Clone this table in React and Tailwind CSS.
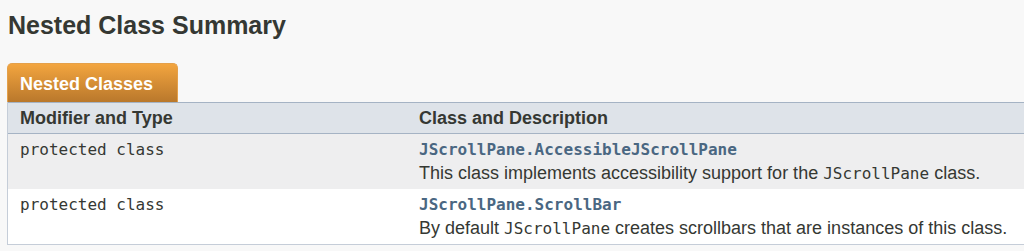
import React from 'react';

const mono = "font-['DejaVu_Sans_Mono',monospace]";

const rows = [
  {
    modifier: 'protected class',
    name: 'JScrollPane.AccessibleJScrollPane',
    desc: (
      <>
        This class implements accessibility support for the{' '}
        <code className={`${mono} text-[16px]`}>JScrollPane</code> class.
      </>
    ),
    bg: 'bg-[#eeeeef]',
  },
  {
    modifier: 'protected class',
    name: 'JScrollPane.ScrollBar',
    desc: (
      <>
        By default <code className={`${mono} text-[16px]`}>JScrollPane</code> creates scrollbars that are
        instances of this class.
      </>
    ),
    bg: 'bg-white',
  },
];

const App = () => {
  return (
    <div className="w-[1024px] h-[251px] overflow-hidden bg-[#f8f8f8] font-['Liberation_Sans',Arial,sans-serif] text-[#353833]">
      <h3 className="pl-[8px] pt-[10px] text-[25px] leading-[30px] font-bold text-[#353833]">Nested Class Summary</h3>

      <div className="pl-[7px] pt-[23px]">
        {/* tab */}
        <div className="w-[171px] h-[39px] rounded-t-[5px] bg-gradient-to-b from-[#f3a53f] to-[#b9782c] border-t border-x border-[#e4a04a] pl-[12px] pt-[9px]">
          <span className="text-white font-bold text-[18px] leading-[22px]">Nested Classes</span>
        </div>

        <div className="w-[1030px] border-l border-b border-[#c5cdd8]">
          {/* header */}
          <div className="flex h-[32px] items-center bg-[#dee3e9] border-t border-b border-[#a5b3c4] text-[18px] font-bold text-[#353833]">
            <div className="w-[411px] pl-[12px]">Modifier and Type</div>
            <div className="flex-1">Class and Description</div>
          </div>

          {rows.map((r, i) => (
            <div key={i} className={`flex h-[55px] ${r.bg}`}>
              <div className={`w-[411px] pl-[12px] pt-[5px] ${mono} text-[16px] leading-[22px] text-[#353833]`}>
                {r.modifier}
              </div>
              <div className="flex-1 pt-[5px]">
                <div className={`${mono} text-[16px] leading-[22px] font-bold text-[#4a6782]`}>{r.name}</div>
                <div className="text-[18px] leading-[24px] text-[#353833]">{r.desc}</div>
              </div>
            </div>
          ))}
        </div>
      </div>
    </div>
  );
};

export default App;
